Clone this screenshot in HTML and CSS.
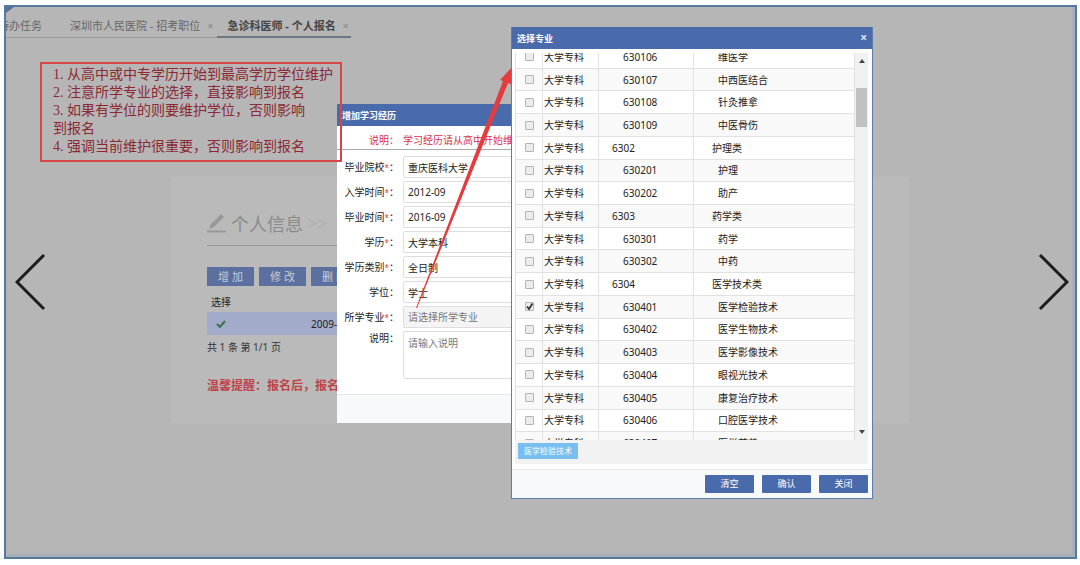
FILE: index.html
```html
<!DOCTYPE html>
<html lang="zh-CN">
<head>
<meta charset="utf-8">
<title>个人报名</title>
<link rel="stylesheet" href="styles.css">
</head>
<body>
<div class="frame">
  <span class="corner"></span>
  <nav class="tabs">
    <a class="tab tab-first" href="#">待办任务</a>
    <a class="tab" href="#">深圳市人民医院 - 招考职位 <span class="tab-x">×</span></a>
    <a class="tab tab-active" href="#">急诊科医师 - 个人报名 <span class="tab-x">×</span></a>
  </nav>

  <main class="panel">
    <h1 class="heading">
      <svg class="pencil" viewBox="0 0 20 20"><path d="M0 18.500H19" stroke="#989898" stroke-width="2"/><path d="M2 16L4 11L14 1L17 4L7 14Z" fill="#989898"/></svg>
      个人信息 <span class="more">&gt;&gt;</span>
    </h1>
    <div class="toolbar">
      <button class="tool" type="button">增 加</button>
      <button class="tool" type="button">修 改</button>
      <button class="tool" type="button">删 除</button>
    </div>
    <table class="records">
      <tr><th>选择</th><th></th></tr>
      <tr class="picked"><td><svg class="tick" viewBox="0 0 10 8"><path d="M1 4L4 7L9 1" fill="none" stroke="#3b7350" stroke-width="2"/></svg></td><td class="when">2009-09</td></tr>
    </table>
    <p class="pager">共 1 条 第 1/1 页</p>
    <p class="warn">温馨提醒：报名后，报名</p>
  </main>

  <form class="dialog edu">
    <h2 class="bar">增加学习经历</h2>
    <div class="row intro"><span class="lab">说明：</span><span class="msg">学习经历请从高中开始维护</span></div>
    <div class="fields">
      <div class="row"><label class="lab" for="f1">毕业院校<i>*</i>：</label><input class="inp" id="f1" value="重庆医科大学"></div>
      <div class="row"><label class="lab" for="f2">入学时间<i>*</i>：</label><input class="inp" id="f2" value="2012-09"></div>
      <div class="row"><label class="lab" for="f3">毕业时间<i>*</i>：</label><input class="inp" id="f3" value="2016-09"></div>
      <div class="row"><label class="lab" for="f4">学历<i>*</i>：</label><input class="inp" id="f4" value="大学本科"></div>
      <div class="row"><label class="lab" for="f5">学历类别<i>*</i>：</label><input class="inp" id="f5" value="全日制"></div>
      <div class="row"><label class="lab" for="f6">学位：</label><input class="inp" id="f6" value="学士"></div>
      <div class="row"><label class="lab" for="f7">所学专业<i>*</i>：</label><input class="inp grey" id="f7" placeholder="请选择所学专业"></div>
      <div class="row top"><label class="lab" for="f8">说明：</label><textarea class="inp area" id="f8" placeholder="请输入说明"></textarea></div>
    </div>
    <div class="foot"></div>
  </form>

  <ol class="notes">
    <li>1. 从高中或中专学历开始到最高学历学位维护</li>
    <li>2. 注意所学专业的选择，直接影响到报名</li>
    <li>3. 如果有学位的则要维护学位，否则影响<br>到报名</li>
    <li>4. 强调当前维护很重要，否则影响到报名</li>
  </ol>

  <svg class="arrow" viewBox="0 0 110 250"><path d="M0 247L87 20L84 19L97 5L97 24L92 22L1 247Z" fill="#e23c3f"/></svg>

  <form class="dialog major">
    <div class="bar"><h2 class="bar-title">选择专业</h2><button class="close" type="button" aria-label="关闭窗口">×</button></div>
    <div class="list">
      <div class="view">
        <table class="majors">
          <colgroup><col class="c1"><col class="c2"><col class="c3"><col></colgroup>
          <tbody id="rows"></tbody>
        </table>
      </div>
      <div class="scroll"><span class="up"></span><span class="thumb"></span><span class="down"></span></div>
    </div>
    <div class="chosen"><span class="tag">医学检验技术</span></div>
    <div class="foot actions">
      <button class="act" type="button">清空</button>
      <button class="act" type="button">确认</button>
      <button class="act" type="button">关闭</button>
    </div>
  </form>

  <button class="nav prev" type="button" aria-label="上一张"><svg viewBox="0 0 32 58"><path d="M29 2L2 29L29 56" fill="none" stroke="#1c1c1c" stroke-width="3"/></svg></button>
  <button class="nav next" type="button" aria-label="下一张"><svg viewBox="0 0 32 58"><path d="M3 2L30 29L3 56" fill="none" stroke="#1c1c1c" stroke-width="3"/></svg></button>
</div>
<script src="rows.js"></script>
</body>
</html>
```
FILE: rows.js
```js
const majors = [
  ["630106", "维医学"], ["630107", "中西医结合"], ["630108", "针灸推拿"], ["630109", "中医骨伤"],
  ["6302", "护理类"], ["630201", "护理"], ["630202", "助产"],
  ["6303", "药学类"], ["630301", "药学"], ["630302", "中药"],
  ["6304", "医学技术类"], ["630401", "医学检验技术"], ["630402", "医学生物技术"], ["630403", "医学影像技术"],
  ["630404", "眼视光技术"], ["630405", "康复治疗技术"], ["630406", "口腔医学技术"], ["630407", "医学营养"]
];
document.getElementById("rows").innerHTML = majors.map(([code, name]) => `
  <tr class="${code.length === 4 ? "group" : "item"}">
    <td class="pick"><span class="boxwrap"><input class="box" type="checkbox" aria-label="${name}" ${code === "630401" ? "checked" : ""}><svg class="mark" viewBox="0 0 9 9"><path d="M2 4.500L4 7L7.500 1.500" fill="none" stroke="#333" stroke-width="1.800"/></svg></span></td>
    <td class="level">大学专科</td><td class="code">${code}</td><td class="name">${name}</td>
  </tr>`).join("");
```
FILE: styles.css
```css
* { box-sizing: border-box; }
body { margin: 0; background: #fff; font-family: "Noto Sans", "Noto Sans CJK SC", sans-serif; font-size: 10px; color: #222; }
h1, h2, p, ol { margin: 0; padding: 0; font-weight: normal; }
button, input, textarea { font: inherit; margin: 0; }
.frame { position: relative; overflow: hidden; margin: 5px 3px 6px 4px; height: calc(100vh - 11px); border: 2px solid #56799f; background: #b6b6b6; box-shadow: inset -3px -3px 0 #a7b0ba; }
.corner { position: absolute; left: 0; top: 0; border-top: 6px solid #56719a; border-right: 8px solid transparent; }

.tabs { display: flex; height: 31px; font-size: 11px; line-height: 16px; }
.tab { display: block; padding: 11px 4px 0 10px; color: #666; text-decoration: none; white-space: nowrap; border-bottom: 1px solid #999; }
.tab-first { width: 54px; padding: 11px 18px 0 0; direction: rtl; overflow: hidden; }
.tab-active { padding-right: 2px; color: #444; border-bottom: 2px solid #6b7784; font-weight: bold; }
.tab-x { margin-left: 4px; color: #888; font-weight: normal; }

.panel { width: 69%; margin: 139px auto 0 165px; height: 246px; padding: 32px 36px 0; background: #bababa; }
.heading { display: flex; align-items: center; gap: 4px; height: 37px; padding-bottom: 9px; border-bottom: 1px solid #999; font-size: 18px; color: #8a8a8a; }
.pencil { width: 20px; height: 20px; }
.more { color: #afafaf; }
.toolbar { display: flex; gap: 5px; margin-top: 21px; }
.tool { width: 47px; height: 19px; padding: 0; border: 0; background: #5c70a0; color: #c6ccd8; font-size: 11px; line-height: 18px; }
.records { width: 100%; border-collapse: collapse; margin-top: 4px; }
.records th { height: 22px; padding: 0 4px; text-align: left; font-weight: normal; }
.records td { height: 23px; padding: 0; }
.records th:first-child { width: 104px; }
.picked { background: #a2acca; }
.tick { display: block; width: 10px; height: 8px; margin-left: 9px; }
.pager { margin-top: 4px; line-height: 16px; color: #333; }
.warn { margin-top: 22px; font-size: 12px; line-height: 18px; font-weight: bold; color: #c04248; }

.notes { position: absolute; left: 34px; top: 55px; padding: 2px 7px 4px 11px; border: 2px solid #d84548; list-style: none; font: 14px/18px "Liberation Serif", "Noto Sans CJK SC", serif; color: #8c2833; white-space: nowrap; }

.dialog { position: absolute; background: #fff; }
.bar { display: flex; align-items: center; justify-content: space-between; height: 22px; padding: 0 5px; background: #4a6bab; color: #fff; font-size: 9px; font-weight: bold; }
.edu { left: 331px; top: 97px; width: 400px; }
.row { display: flex; align-items: center; gap: 4px; }
.row.top { align-items: flex-start; }
.lab { width: 62px; text-align: right; line-height: 14px; white-space: nowrap; }
.lab i { color: #e04040; font-size: 8px; font-style: normal; }
.intro { height: 24px; padding-top: 4px; border-bottom: 1px solid #aaa; color: #d8304a; }
.msg { white-space: nowrap; }
.fields { display: flex; flex-direction: column; gap: 3px; padding: 6px 0 15px; }
.inp { flex: 1; height: 22px; padding: 0 4px; border: 1px solid #ddd; border-radius: 2px; background: #fff; color: #222; outline: 0; }
.inp::placeholder { color: #777; }
.grey { background: #f4f4f4; }
.area { height: 48px; padding: 3px 4px; resize: none; }
.foot { height: 29px; border-top: 1px solid #e6e8ec; background: #f8f9fb; }

.arrow { position: absolute; left: 410px; top: 54px; width: 110px; height: 250px; }

.major { left: 505px; top: 20px; width: 362px; border: 1px solid #5f7cae; border-top: 0; }
.bar-title { font-size: 9px; font-weight: bold; }
.close { padding: 0; border: 0; background: none; color: #dfe8f8; font-size: 12px; line-height: 14px; font-weight: bold; }
.list { display: flex; height: 391px; padding: 4px 4px 0 3px; }
.view { flex: 1; overflow: hidden; }
.majors { width: 100%; height: 410px; margin-top: -8px; table-layout: fixed; border-collapse: collapse; }
.c1 { width: 27px; }
.c2 { width: 56px; }
.c3 { width: 95px; }
.majors td { padding: 0; border: 1px solid #e2e2e2; line-height: 14px; white-space: nowrap; }
.majors tr:nth-child(even) { background: #f9f9f9; }
.boxwrap { display: grid; width: 9px; height: 9px; margin: 0 auto; }
.box, .mark { grid-area: 1 / 1; width: 9px; height: 9px; }
.box { appearance: none; border: 1px solid #b5b5b5; border-radius: 1px; background: #ececec; }
.mark { visibility: hidden; pointer-events: none; }
.box:checked + .mark { visibility: visible; }
.majors .level { padding-left: 1px; }
.majors .code { padding-left: 24px; }
.majors .name { padding-left: 24px; }
.majors .group .code { padding-left: 13px; }
.majors .group .name { padding-left: 18px; }
.scroll { display: flex; flex-direction: column; align-items: center; width: 13px; padding: 6px 0; background: #f1f1f1; }
.up { border: 3px solid transparent; border-top: 0; border-bottom: 4px solid #444; }
.thumb { width: 11px; height: 39px; margin-top: 25px; background: #c1c1c1; }
.down { margin-top: auto; border: 3px solid transparent; border-bottom: 0; border-top: 4px solid #444; }
.chosen { height: 24px; margin: 0 4px 5px 3px; padding: 3px; background: #f2f2f2; }
.tag { display: block; width: 60px; height: 16px; background: #78bff0; color: #fff; font-size: 8px; line-height: 16px; text-align: center; }
.actions { display: flex; justify-content: flex-end; gap: 8px; padding: 5px 4px 0; }
.act { width: 49px; height: 18px; padding: 0; border: 0; border-radius: 1px; background: #4a6bab; color: #fff; font-size: 9px; line-height: 16px; }

.nav { position: absolute; top: 246px; width: 32px; height: 58px; padding: 0; border: 0; background: none; }
.nav svg { display: block; width: 32px; height: 58px; }
.prev { left: 9px; }
.next { right: 6px; }
```
